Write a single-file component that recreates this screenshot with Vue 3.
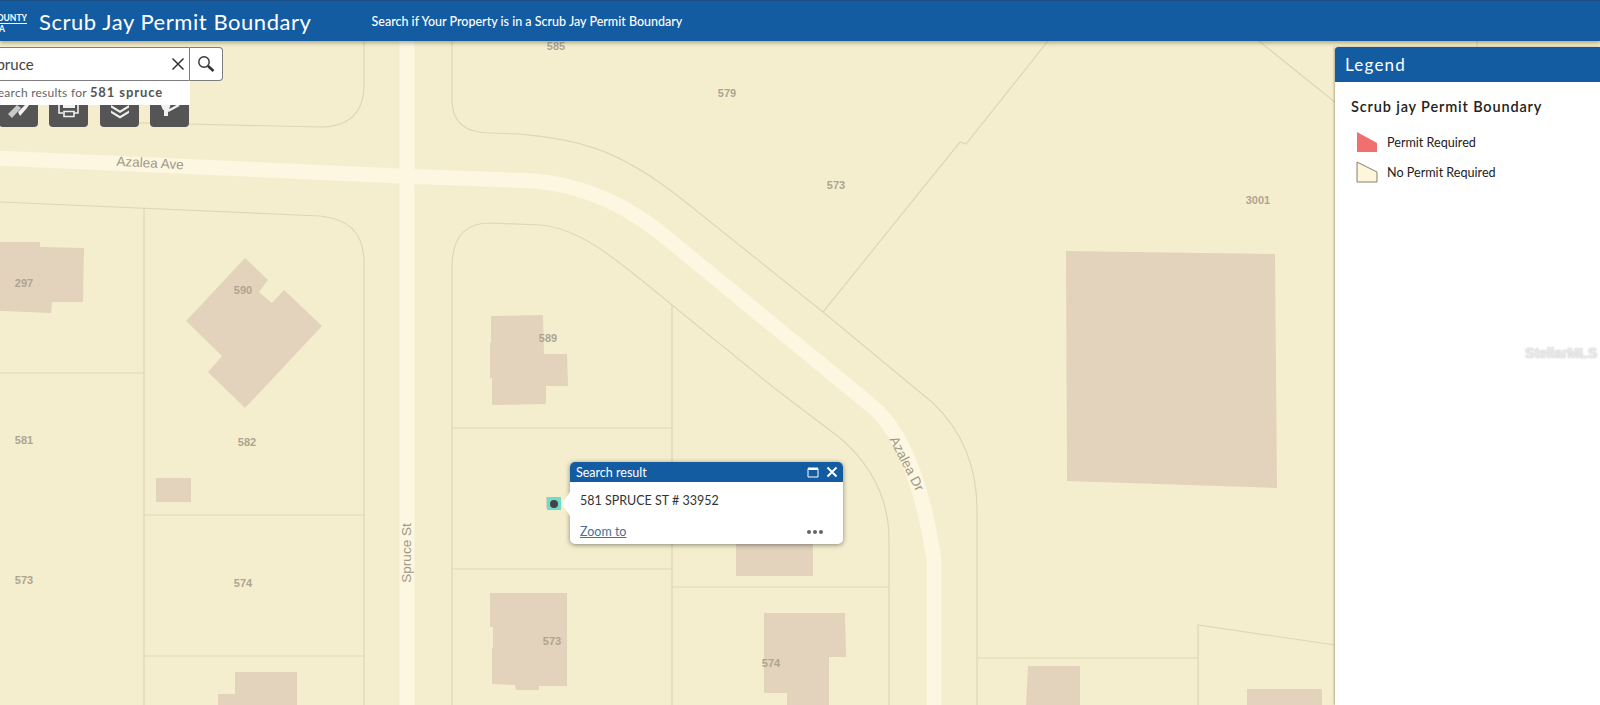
<script setup>
// map is drawn in page coordinates, the svg viewBox starts under the header
const parcelLines = [
  'M364 41 V84 Q364 127 320 127 L100 122',
  'M452 41 V100 Q452 133 490 133 L520 134 C570 140 610 142 683 200 L823 312 L933 403 Q977 445 977 510 V705',
  'M0 202 L320 216 Q364 220 364 262 V705',
  'M144 208 V705',
  'M0 373 H144',
  'M144 515 H364',
  'M144 656 H364',
  'M452 705 V267 Q452 223 490 223 L540 225 C580 228 615 258 672 305 L773 387 L840 438 Q889 480 889 540 V705',
  'M672 305 V705',
  'M452 428 H672',
  'M452 569 H672',
  'M672 587 H889',
  'M978 658 H1198',
  'M1198 705 V625 L1335 645',
  'M1048 41 L966 144 L960 142 L823 312',
  'M1259 41 L1336 103',
  'M1477 41 V48',
]

const buildings = [
  '0,242 40,242 40,247 84,248 83,302 52,302 51,313 2,311 0,311',
  '245,258 268,280 259,292 272,303 284,290 322,326 245,408 208,372 222,356 186,321',
  '156,478 191,478 191,502 156,502',
  '235,672 297,672 297,705 218,705 218,694 235,694',
  '491,316 543,315 544,354 567,354 568,386 546,386 546,404 492,405 492,378 490,378 490,343 491,343',
  '490,593 567,593 567,686 539,686 539,690 516,690 515,685 492,684 492,648 493,648 493,627 490,627',
  '764,613 845,613 846,657 829,657 829,705 787,705 787,693 764,693',
  '736,540 813,540 813,576 736,576',
  '1028,666 1080,666 1080,705 1026,705',
  '1247,689 1322,689 1322,705 1247,705',
  '1066,251 1275,254 1277,488 1067,481',
]

const labels = [
  { text: '585', x: 556, y: 47 },
  { text: '579', x: 727, y: 94 },
  { text: '573', x: 836, y: 186 },
  { text: '3001', x: 1258, y: 201 },
  { text: '297', x: 24, y: 284 },
  { text: '590', x: 243, y: 291 },
  { text: '589', x: 548, y: 339 },
  { text: '581', x: 24, y: 441 },
  { text: '582', x: 247, y: 443 },
  { text: '573', x: 24, y: 581 },
  { text: '574', x: 243, y: 584 },
  { text: '573', x: 552, y: 642 },
  { text: '574', x: 771, y: 664 },
]

const streets = [
  { text: 'Azalea Ave', x: 150, y: 164, angle: 3 },
  { text: 'Spruce St', x: 407, y: 553, angle: -90 },
  { text: 'Azalea Dr', x: 906, y: 464, angle: 63 },
]
</script>

<template>
  <div class="app">
    <header class="topbar">
      <div class="logo">
        <span class="logo-county">COUNTY</span>
        <span class="logo-state">A</span>
      </div>
      <h1 class="app-title">Scrub Jay Permit Boundary</h1>
      <p class="app-subtitle">Search if Your Property is in a Scrub Jay Permit Boundary</p>
    </header>

    <main class="map">
      <svg class="map-canvas" viewBox="0 41 1600 664" aria-hidden="true">
        <path
          class="road"
          d="M-5 158 L400 176 L535 181 C580 185 620 202 657 230 L873 407 C900 430 922 480 934 560 V705"
        />
        <path class="road" d="M407 41 V705" />
        <path v-for="(line, i) in parcelLines" :key="i" class="parcel" :d="line" />
        <polygon v-for="(points, i) in buildings" :key="i" class="building" :points="points" />
        <text
          v-for="(label, i) in labels"
          :key="i"
          class="parcel-label"
          :x="label.x"
          :y="label.y"
        >{{ label.text }}</text>
        <text
          v-for="street in streets"
          :key="street.text"
          class="street-label"
          :transform="`translate(${street.x} ${street.y}) rotate(${street.angle})`"
        >{{ street.text }}</text>
      </svg>

      <div class="widgets">
        <div class="search">
          <div class="search-input">
            <span class="search-value">581 spruce</span>
            <svg class="search-clear" viewBox="0 0 14 14" width="14" height="14">
              <path d="M1.5 1.5 L12.5 12.5 M12.5 1.5 L1.5 12.5" />
            </svg>
          </div>
          <button class="search-btn" type="button" aria-label="Search">
            <svg viewBox="0 0 18 18" width="18" height="18">
              <circle cx="7" cy="7" r="5.2" />
              <path class="search-handle" d="M11 11 L16.5 16" />
            </svg>
          </button>
        </div>
        <div class="search-results">Search results for <b>581 spruce</b></div>
        <div class="tools">
          <button class="tool" type="button" aria-label="Measure">
            <svg viewBox="0 0 39 39" width="39" height="39">
              <path class="tool-soft" d="M9 26 L18 17 L22 20 L13 30 Z" />
              <path class="tool-fill" d="M21 28 L28 20 L30 17 L26 17 L19 24 Z" />
            </svg>
          </button>
          <button class="tool" type="button" aria-label="Print">
            <svg viewBox="0 0 39 39" width="39" height="39">
              <path class="tool-line" d="M10 17 V25 H14 M29 17 V25 H25" />
              <path class="tool-line" d="M15 23.5 H25 V28.5 H15 Z" />
              <path class="tool-fill" d="M14 15 H26 V20 H14 Z" />
            </svg>
          </button>
          <button class="tool" type="button" aria-label="Layers">
            <svg viewBox="0 0 39 39" width="39" height="39">
              <path class="tool-fill" d="M11 17 L20 22.5 L29 17 V19.5 L20 25 L11 19.5 Z" />
              <path class="tool-fill" d="M11 22.5 L20 28 L29 22.5 V25 L20 30.5 L11 25 Z" />
            </svg>
          </button>
          <button class="tool" type="button" aria-label="Draw">
            <svg viewBox="0 0 39 39" width="39" height="39">
              <path class="tool-fill" d="M10 15 H21 L19 22 H18 V28 H14 V22 H13 Z" />
              <path class="tool-stroke" d="M18 23 L29 17" />
            </svg>
          </button>
        </div>
      </div>

      <div class="marker"><span class="marker-dot"></span></div>

      <div class="popup">
        <span class="popup-arrow"></span>
        <div class="popup-head">
          <span>Search result</span>
          <div class="popup-actions">
            <svg viewBox="0 0 12 12" width="12" height="12">
              <path class="icon-line" d="M1 2.5 H11 V11 H1 Z" />
              <path class="icon-bar" d="M1 1.5 H11 V4 H1 Z" />
            </svg>
            <svg viewBox="0 0 12 12" width="12" height="12">
              <path class="icon-close" d="M1.5 1.5 L10.5 10.5 M10.5 1.5 L1.5 10.5" />
            </svg>
          </div>
        </div>
        <div class="popup-body">
          <p class="popup-text">581 SPRUCE ST # 33952</p>
          <div class="popup-foot">
            <a class="popup-link">Zoom to</a>
            <span class="popup-dots"><i></i><i></i><i></i></span>
          </div>
        </div>
      </div>

      <aside class="legend">
        <div class="legend-head">Legend</div>
        <div class="legend-body">
          <h2 class="legend-title">Scrub jay Permit Boundary</h2>
          <div class="legend-row">
            <svg viewBox="0 0 22 22" width="22" height="22">
              <polygon points="1,1 21,12 21,21 1,21" fill="#f0706f" />
            </svg>
            <span>Permit Required</span>
          </div>
          <div class="legend-row">
            <svg viewBox="0 0 22 22" width="22" height="22">
              <polygon points="1,1 21,11 21,21 1,21" fill="#fdf5dc" stroke="#85806c" stroke-width="1" />
            </svg>
            <span>No Permit Required</span>
          </div>
        </div>
        <div class="watermark">StellarMLS</div>
      </aside>
    </main>
  </div>
</template>

<style scoped>
.app {
  display: flex;
  flex-direction: column;
  height: 705px;
  overflow: hidden;
  font-family: Lato, "Open Sans", sans-serif;
}

.topbar {
  position: relative;
  z-index: 3;
  display: flex;
  align-items: center;
  flex: 0 0 41px;
  box-sizing: border-box;
  border-top: 1px solid #1b4f86;
  background: #145ca2;
  color: #fff;
  box-shadow: 0 2px 4px rgba(90, 80, 50, 0.45);
}

.logo {
  display: flex;
  flex-direction: column;
  align-items: flex-start;
  flex: 0 0 27px;
  width: 27px;
  margin-top: 4px;
  overflow: hidden;
  font-weight: 700;
  font-size: 8.5px;
  line-height: 10px;
}

.logo-county {
  display: block;
  align-self: flex-end;
  border-bottom: 1px solid #fff;
  margin-left: -12px;
  white-space: nowrap;
}

.logo-state {
  margin-left: -1px;
}

.app-title {
  margin: 0 0 0 12px;
  font-size: 22px;
  font-weight: 400;
  letter-spacing: 0.55px;
  white-space: nowrap;
}

.app-subtitle {
  margin: 0 0 0 60px;
  font-size: 12.5px;
  font-weight: 500;
  white-space: nowrap;
}

.map {
  position: relative;
  flex: 1;
  background: #f5eece;
}

.map-canvas {
  position: absolute;
  inset: 0;
  width: 100%;
  height: 100%;
}

.road {
  fill: none;
  stroke: #fdf6e0;
  stroke-width: 15;
  stroke-linejoin: round;
}

.parcel {
  fill: none;
  stroke: #e0d6b4;
  stroke-width: 1.2;
}

.building {
  fill: #e3d2bc;
}

.parcel-label {
  fill: #aea590;
  font-family: "Liberation Sans", sans-serif;
  font-size: 11px;
  font-weight: 700;
  text-anchor: middle;
  dominant-baseline: middle;
}

.street-label {
  fill: #9f9886;
  font-family: "Liberation Sans", sans-serif;
  font-size: 13.5px;
  text-anchor: middle;
  dominant-baseline: middle;
}

.widgets {
  position: absolute;
  top: 6px;
  left: -18px;
  width: 241px;
}

.search {
  display: flex;
  height: 34px;
}

.search-input {
  display: flex;
  align-items: center;
  justify-content: space-between;
  box-sizing: border-box;
  width: 208px;
  padding: 0 4px 0 0;
  border: 1px solid #7d7d7d;
  border-radius: 3px 0 0 3px;
  background: #fff;
  color: #444;
  font-size: 15px;
}

.search-value {
  margin-left: -23px;
  white-space: nowrap;
}

.search-clear {
  fill: none;
  stroke: #333;
  stroke-width: 1.5;
}

.search-btn {
  flex: 1;
  display: flex;
  align-items: center;
  justify-content: center;
  padding: 0;
  border: 1px solid #7d7d7d;
  border-left: 0;
  border-radius: 0 4px 4px 0;
  background: #fff;
}

.search-btn svg {
  fill: none;
  stroke: #333;
  stroke-width: 1.4;
}

.search-handle {
  stroke-width: 2.6;
}

.search-results {
  position: relative;
  z-index: 1;
  box-sizing: border-box;
  width: 208px;
  height: 24px;
  padding: 2px 0 0 9px;
  background: #fff;
  color: #666;
  font-size: 12px;
  letter-spacing: 0.25px;
  line-height: 19px;
  white-space: nowrap;
}

.search-results b {
  color: #555;
  font-size: 13px;
  letter-spacing: 0.9px;
}

.tools {
  display: flex;
  gap: 11.3px;
  margin-top: -17px;
  padding-left: 17px;
}

.tool {
  width: 39px;
  height: 39px;
  padding: 0;
  border: 0;
  border-radius: 4px;
  background: #555;
}

.tool svg {
  display: block;
}

.tool-fill {
  fill: #f1f1f1;
}

.tool-soft {
  fill: #c9c9c9;
}

.tool-line {
  fill: none;
  stroke: #f1f1f1;
  stroke-width: 1.6;
}

.tool-stroke {
  fill: none;
  stroke: #f1f1f1;
  stroke-width: 2.5;
}

.marker {
  position: absolute;
  top: 456px;
  left: 547px;
  display: flex;
  align-items: center;
  justify-content: center;
  width: 14px;
  height: 13px;
  background: #6fdccb;
  box-shadow: -2px -1px 0 -1px #d8d2b0;
}

.marker-dot {
  width: 8px;
  height: 8px;
  border-radius: 50%;
  background: #444;
}

.popup {
  position: absolute;
  top: 421px;
  left: 570px;
  width: 273px;
  height: 82px;
  border-radius: 5px;
  background: #fff;
  box-shadow: 0 1px 5px rgba(0, 0, 0, 0.45);
  color: #333;
}

.popup-arrow {
  position: absolute;
  top: 30px;
  left: -8px;
  width: 0;
  height: 0;
  border-top: 12px solid transparent;
  border-bottom: 12px solid transparent;
  border-right: 8px solid #fff;
}

.popup-head {
  display: flex;
  align-items: center;
  justify-content: space-between;
  height: 20px;
  padding: 0 5px 0 6px;
  border-radius: 5px 5px 0 0;
  background: #145ca2;
  color: #fff;
  font-size: 12.5px;
}

.popup-actions {
  display: flex;
  gap: 7px;
}

.popup-actions svg {
  display: block;
}

.icon-line {
  fill: none;
  stroke: #fff;
  stroke-width: 1;
}

.icon-bar {
  fill: #fff;
}

.icon-close {
  stroke: #fff;
  stroke-width: 2;
}

.popup-body {
  padding: 11px 10px 0;
}

.popup-text {
  margin: 0;
  font-size: 12.5px;
  line-height: 16px;
}

.popup-foot {
  display: flex;
  align-items: center;
  justify-content: space-between;
  margin-top: 15px;
  padding-right: 10px;
  line-height: 16px;
}

.popup-link {
  color: #46709b;
  font-size: 12.5px;
  text-decoration: underline;
}

.popup-dots {
  display: flex;
  gap: 2px;
}

.popup-dots i {
  width: 4px;
  height: 4px;
  border-radius: 50%;
  background: #666;
}

.legend {
  position: absolute;
  top: 6px;
  right: 0;
  bottom: 0;
  width: 265px;
  background: #fff;
  box-shadow: -1px 0 2px rgba(120, 110, 80, 0.5);
  color: #222;
}

.legend-head {
  height: 35px;
  padding-left: 10px;
  border-radius: 3px 0 0 0;
  background: #145ca2;
  color: #fff;
  font-size: 17px;
  letter-spacing: 1.2px;
  line-height: 35px;
}

.legend-body {
  padding: 16px 0 0 16px;
}

.legend-title {
  margin: 0 0 11px;
  font-size: 14.5px;
  font-weight: 600;
  letter-spacing: 0.85px;
  line-height: 18px;
}

.legend-row {
  display: flex;
  align-items: center;
  gap: 9px;
  height: 30px;
  padding-left: 5px;
  font-size: 12.6px;
}

.watermark {
  position: absolute;
  top: 298px;
  right: 3px;
  color: #e8e8e8;
  font-family: "Liberation Sans", sans-serif;
  font-size: 14.5px;
  font-weight: 700;
  letter-spacing: -0.3px;
  text-shadow: 0 0 2px #c4c4c4;
}
</style>

<style>
html,
body {
  margin: 0;
  overflow: hidden;
}
</style>
